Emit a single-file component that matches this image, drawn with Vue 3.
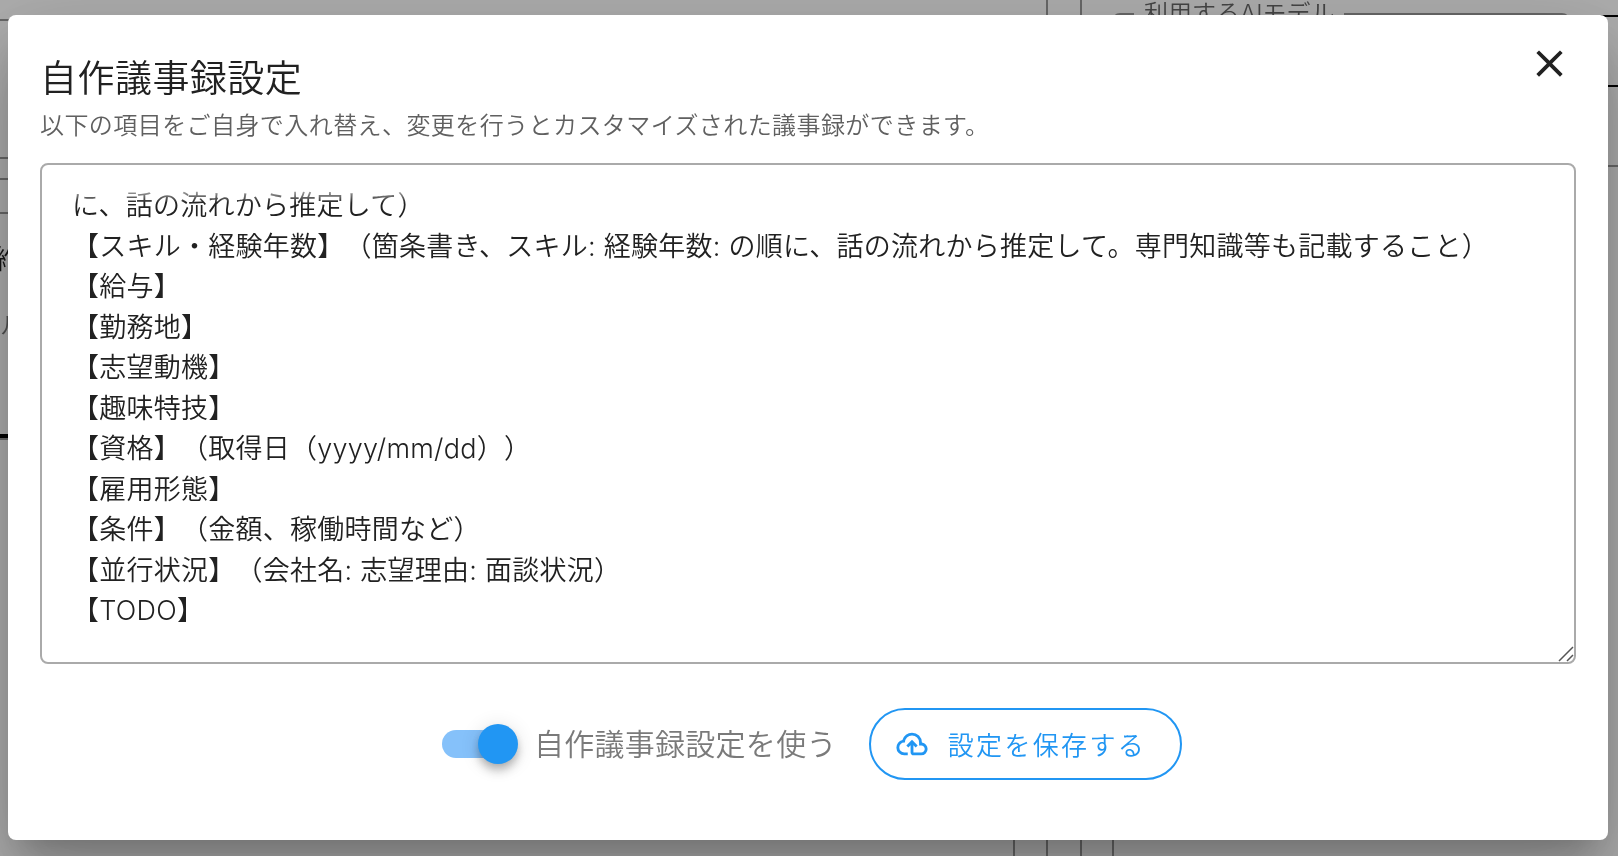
<script setup>
import { ref } from 'vue'

const template = ref(`に、話の流れから推定して）
【スキル・経験年数】（箇条書き、スキル: 経験年数: の順に、話の流れから推定して。専門知識等も記載すること）
【給与】
【勤務地】
【志望動機】
【趣味特技】
【資格】（取得日（yyyy/mm/dd））
【雇用形態】
【条件】（金額、稼働時間など）
【並行状況】（会社名: 志望理由: 面談状況）
【TODO】`)
const enabled = ref(true)
</script>

<template>
  <div class="page">
    <div class="backdrop" aria-hidden="true">
      <div class="panel panel-left">
        <div class="row row-a"></div>
        <div class="row row-b"></div>
        <div class="row row-c"></div>
        <div class="row row-d"></div>
        <div class="tab">
          <span class="tab-name">約</span>
          <span class="tab-note">ル</span>
        </div>
        <div class="inner inner-left"></div>
      </div>
      <div class="panel panel-right">
        <fieldset class="model">
          <legend>利用するAIモデル</legend>
        </fieldset>
        <div class="inner inner-right"></div>
      </div>
      <div class="edge">
        <div class="edge-box"></div>
        <div class="edge-line"></div>
      </div>
    </div>

    <div class="overlay">
      <section class="dialog" role="dialog" aria-labelledby="dialog-title">
        <header class="head">
          <div>
            <h1 id="dialog-title">自作議事録設定</h1>
            <p id="dialog-note">以下の項目をご自身で入れ替え、変更を行うとカスタマイズされた議事録ができます。</p>
          </div>
          <button class="close" type="button" aria-label="閉じる">
            <svg viewBox="0 0 24 24"><path d="M19 6.41 17.59 5 12 10.59 6.41 5 5 6.41 10.59 12 5 17.59 6.41 19 12 13.41 17.59 19 19 17.59 13.41 12z" /></svg>
          </button>
        </header>

        <div class="field">
          <textarea v-model="template" rows="11" aria-labelledby="dialog-title" aria-describedby="dialog-note" spellcheck="false"></textarea>
          <svg class="grip" viewBox="0 0 18 18"><path d="M2 16 16 2M10 16l6-6" /></svg>
        </div>

        <footer class="actions">
          <label class="switch">
            <input v-model="enabled" type="checkbox" role="switch" />
            <span>自作議事録設定を使う</span>
          </label>
          <button class="save" type="button">
            <svg viewBox="0 0 24 24"><path d="M6.5 20Q4.22 20 2.61 18.43 1 16.85 1 14.58 1 12.63 2.17 11.1 3.35 9.57 5.25 9.15 5.88 6.85 7.75 5.43 9.63 4 12 4 14.93 4 16.96 6.04 19 8.07 19 11 20.73 11.2 21.86 12.5 23 13.78 23 15.5 23 17.38 21.69 18.69 20.38 20 18.5 20H13Q12.18 20 11.59 19.41 11 18.83 11 18V12.85L9.4 14.4 8 13 12 9 16 13 14.6 14.4 13 12.85V18H18.5Q19.55 18 20.27 17.27 21 16.55 21 15.5 21 14.45 20.27 13.73 19.55 13 18.5 13H17V11Q17 8.93 15.54 7.46 14.08 6 12 6 9.93 6 8.46 7.46 7 8.93 7 11H6.5Q5.05 11 4.03 12.03 3 13.05 3 14.5 3 15.95 4.03 17 5.05 18 6.5 18H9V20Z" /></svg>
            <span>設定を保存する</span>
          </button>
        </footer>
      </section>
    </div>
  </div>
</template>

<style>
body {
  background: #fff;
  overflow: hidden;
}
</style>

<style scoped>
.page {
  font-family: Inter, "Noto Sans CJK JP DemiLight", "Noto Sans CJK JP", sans-serif;
  font-weight: 350;
  text-spacing-trim: space-all;
  color: #212121;
}

.backdrop {
  position: fixed;
  inset: 0;
  display: flex;
}

.panel,
.row,
.inner,
.tab,
.edge-box,
.edge-line {
  box-sizing: border-box;
}

.panel {
  display: flex;
  flex-direction: column;
}

.panel-left {
  flex: 0 0 1048px;
  border-right: 2px solid #999;
}

.row {
  border-bottom: 2px solid #999;
}

.row-a {
  height: 21px;
}

.row-b {
  height: 138px;
}

.row-c {
  height: 21px;
}

.row-d {
  height: 34px;
}

.tab {
  height: 226px;
  border-bottom: 2px solid #999;
  box-shadow: inset 0 -4px #000;
  display: flex;
  flex-direction: column;
  gap: 30px;
  padding-top: 26px;
}

.tab-name {
  margin-left: -6px;
  font-size: 27px;
  font-weight: 400;
  line-height: 40px;
}

.tab-note {
  font-size: 24px;
  line-height: 32px;
  color: #777;
}

.inner {
  flex: 1;
}

.inner-left {
  margin-right: 31px;
  border-right: 2px solid #999;
}

.panel-right {
  flex: 1;
  margin-left: 32px;
  border-left: 2px solid #999;
}

.inner-right {
  margin-left: 30px;
  border-left: 2px solid #999;
}

.model {
  height: 80px;
  margin: 0 14px 0 30px;
  padding: 0 20px;
  border: 2px solid #999;
  border-radius: 8px;
}

.model legend {
  padding: 0 10px;
  font-size: 24px;
  line-height: 28px;
  color: #666;
}

.edge {
  flex: 0 0 34px;
  padding-top: 15px;
}

.edge-box {
  height: 72px;
  border: solid #000;
  border-width: 2px 0;
}

.edge-line {
  height: 80px;
  border-bottom: 2px solid #999;
}

.overlay {
  position: relative;
  min-height: 100vh;
  box-sizing: border-box;
  padding: 15px 10px 17px 8px;
  background: rgba(0, 0, 0, 0.32);
}

.dialog {
  padding: 40px 32px 60px;
  background: #fff;
  border-radius: 8px;
  box-shadow:
    0 22px 30px -14px rgba(0, 0, 0, 0.2),
    0 48px 76px 6px rgba(0, 0, 0, 0.14),
    0 18px 92px 16px rgba(0, 0, 0, 0.12);
}

.head {
  display: flex;
  justify-content: space-between;
  align-items: flex-start;
  margin-bottom: 19px;
}

h1 {
  margin: 0;
  font-size: 37px;
  font-weight: inherit;
  line-height: 48px;
  letter-spacing: 0.0125em;
}

p {
  margin: 5px 0 0;
  font-size: 24px;
  line-height: 36px;
  letter-spacing: 0.0178em;
  color: #606060;
}

button {
  font: inherit;
  background: none;
  cursor: pointer;
}

.close {
  display: flex;
  margin: -14px 4px 0 0;
  padding: 0;
  border: 0;
  color: #212121;
}

.close svg {
  width: 45px;
  height: 45px;
  fill: currentColor;
}

.field {
  position: relative;
  border: 2px solid #aaa;
  border-radius: 8px;
}

textarea {
  display: block;
  width: 100%;
  box-sizing: border-box;
  margin: 0;
  padding: 21px 30px 30px;
  border: 0;
  outline: 0;
  resize: none;
  overflow: hidden;
  background: none;
  font: inherit;
  font-size: 27px;
  line-height: 1.5;
  letter-spacing: 0.0094em;
  color: #212121;
  mask-image: linear-gradient(transparent 18px, #000 38px);
}

.grip {
  position: absolute;
  right: -1px;
  bottom: -1px;
  width: 18px;
  height: 18px;
  fill: none;
  stroke: #555;
  stroke-width: 1.5;
}

.actions {
  display: flex;
  justify-content: center;
  align-items: center;
  gap: 32px;
  margin-top: 44px;
  padding-left: 8px;
}

.switch {
  display: flex;
  align-items: center;
  gap: 16px;
  font-size: 30px;
  line-height: 40px;
  letter-spacing: 0.0094em;
  color: #7a7a7a;
}

.switch input {
  appearance: none;
  display: flex;
  align-items: center;
  width: 76px;
  height: 28px;
  margin: 0;
  border-radius: 14px;
  background: linear-gradient(90deg, #85c1fa 68px, transparent 68px);
}

.switch input::before {
  content: "";
  width: 40px;
  height: 40px;
  flex: none;
  border-radius: 50%;
  background: #2196f3;
  box-shadow:
    0 4px 8px -2px rgba(0, 0, 0, 0.2),
    0 8px 10px rgba(0, 0, 0, 0.14),
    0 2px 20px rgba(0, 0, 0, 0.12);
}

.switch input:checked::before {
  margin-left: auto;
}

.save {
  display: flex;
  align-items: center;
  gap: 19px;
  height: 72px;
  padding: 0 34px 0 24px;
  border: 2px solid #2196f3;
  border-radius: 36px;
  font-size: 26px;
  letter-spacing: 0.09em;
  color: #2196f3;
}

.save svg {
  width: 34px;
  height: 34px;
  fill: currentColor;
}
</style>
